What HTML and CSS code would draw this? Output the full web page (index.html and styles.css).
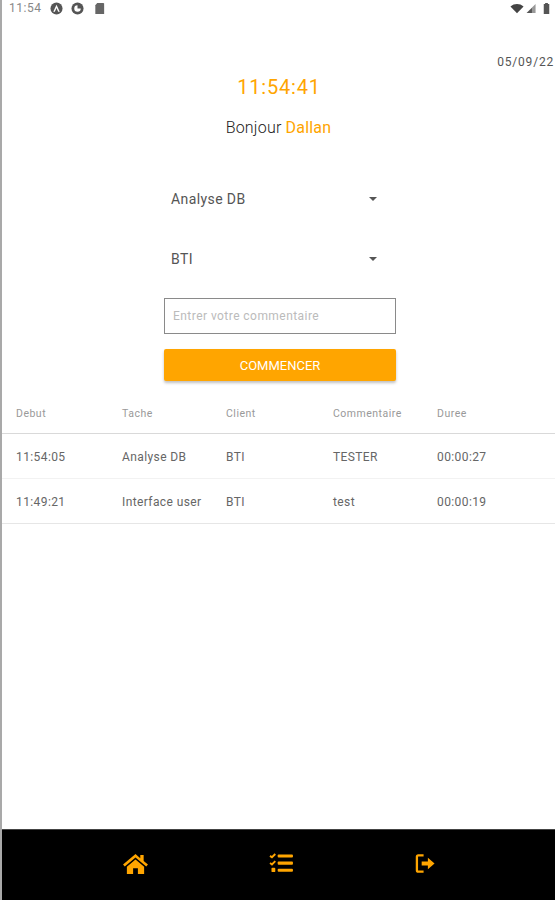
FILE: index.html
```html
<!DOCTYPE html>
<html lang="fr">
<head>
<meta charset="utf-8">
<title>Pointage</title>
<link rel="stylesheet" href="styles.css">
</head>
<body>
<div class="app">
  <header class="status">
    <div class="status-left">
      <span class="status-time">11:54</span>
      <svg class="si" viewBox="0 0 14 14"><circle cx="7" cy="7" r="6.5" fill="#555"/><path d="M7 3 L10.5 10.5 H8.8 L7 6.5 L5.2 10.5 H3.5Z" fill="#fff"/></svg>
      <svg class="si" viewBox="0 0 14 14"><circle cx="7" cy="7" r="6.5" fill="#555"/><path d="M7 3.5a3.5 3.5 0 1 0 3.5 3.5H7V3.5Z" fill="#fff"/></svg>
      <svg class="si si-card" viewBox="0 0 14 14"><path d="M4.5 1H11a1 1 0 0 1 1 1v11H2.5V3.5Z" fill="#666"/></svg>
    </div>
    <div class="status-right">
      <svg class="wifi" viewBox="0 0 16 12"><path d="M8 11.5 0.500 3.600C4.800-.2 11.200-.2 15.500 3.600Z" fill="#444"/></svg>
      <svg class="signal" viewBox="0 0 12 12"><path d="M11 1V11H1Z" fill="#999"/><path d="M7 5.500V11H1.500Z" fill="#555"/></svg>
      <svg class="battery" viewBox="0 0 7 12"><path d="M2 0H5V1H6.500V12H.5V1H2Z" fill="#555"/></svg>
    </div>
  </header>

  <main class="content">
    <div class="date">05/09/22</div>
    <div class="clock">11:54:41</div>
    <div class="greeting">Bonjour <span class="accent">Dallan</span></div>

    <form class="form">
      <div class="select"><span>Analyse DB</span><i class="caret"></i></div>
      <div class="select select-second"><span>BTI</span><i class="caret"></i></div>
      <div class="input">Entrer votre commentaire</div>
      <div class="button">COMMENCER</div>
    </form>

    <section class="table">
      <div class="row head">
        <span>Debut</span><span>Tache</span><span>Client</span><span>Commentaire</span><span>Duree</span>
      </div>
      <div class="row body">
        <span>11:54:05</span><span>Analyse DB</span><span>BTI</span><span>TESTER</span><span>00:00:27</span>
      </div>
      <div class="row body">
        <span>11:49:21</span><span>Interface user</span><span>BTI</span><span>test</span><span>00:00:19</span>
      </div>
    </section>
  </main>

  <nav class="nav">
    <svg class="home" viewBox="0 0 28 24"><path fill="#ffa500" d="M14 2 1 13l1.800 2.200L14 5.800 25.200 15.200 27 13l-4.500-3.700V3h-3.500v3.400ZM14 7.800 5 15.300V23h6.500v-6h5v6H23v-7.700Z"/></svg>
    <svg class="list" viewBox="0 0 26 22"><g fill="#ffa500"><rect x="9" y="1.500" width="16" height="3.200" rx="1"/><rect x="9" y="9" width="16" height="3.200" rx="1"/><rect x="9" y="16.500" width="16" height="3.200" rx="1"/><rect x="2.500" y="15.500" width="4" height="4.500" rx="1"/></g><path d="M1 3l2 1.500L6.500 1M1 10.500l2 1.500 3.500-3.500" fill="none" stroke="#ffa500" stroke-width="2"/></svg>
    <svg class="exit" viewBox="0 0 22 22"><path d="M9 2.500H3.500a1.500 1.500 0 0 0-1.500 1.500V18a1.500 1.500 0 0 0 1.500 1.500H9" fill="none" stroke="#ffa500" stroke-width="2.400"/><path fill="#ffa500" d="M7 9h6.500V5L20.500 11l-7 6v-4H7Z"/></svg>
  </nav>
</div>
</body>
</html>
```
FILE: styles.css
```css
* { box-sizing: border-box; }
html, body { margin: 0; height: 100%; }
body { font-family: Roboto, "Liberation Sans", sans-serif; background: #fff; color: #333; }

.app {
  width: 555px;
  height: 900px;
  display: flex;
  flex-direction: column;
  overflow: hidden;
  border-left: 2px solid #a9a9a9;
}

.status {
  height: 17px;
  display: flex;
  justify-content: space-between;
  align-items: center;
  padding: 0 5px 1px 7px;
  flex: none;
}
.status-left, .status-right { display: flex; align-items: center; }
.status-time { font-size: 12px; color: #888; margin-right: 9px; letter-spacing: .5px; }
.si { width: 13px; height: 13px; margin-right: 8px; }
.si-card { margin-left: 1px; }
.wifi { width: 14px; height: 11px; }
.signal { width: 12px; height: 11px; margin-left: 1px; }
.battery { width: 7px; height: 11px; margin-left: 6px; }

.content { flex: 1; }

.date {
  text-align: right;
  font-size: 12px;
  line-height: 14px;
  letter-spacing: .8px;
  color: #555;
  margin-top: 38px;
  padding-right: 1px;
}
.clock {
  text-align: center;
  font-size: 20px;
  line-height: 24px;
  letter-spacing: .8px;
  color: #ffa500;
  margin-top: 6px;
  padding-left: 1px;
}
.greeting {
  text-align: center;
  font-size: 16px;
  line-height: 20px;
  letter-spacing: .2px;
  font-weight: 300;
  color: #222;
  margin-top: 19px;
}
.accent { color: #ffa500; font-weight: 400; }

.form {
  width: 232px;
  margin: 51px 0 0 162px;
  display: flex;
  flex-direction: column;
}
.select {
  height: 20px;
  width: 216px;
  padding: 0 2px 0 7px;
  display: flex;
  justify-content: space-between;
  align-items: center;
  font-size: 14px;
  letter-spacing: .4px;
  color: #555;
}
.select-second { margin-top: 40px; }
.caret {
  width: 0;
  height: 0;
  border-left: 4.500px solid transparent;
  border-right: 4.500px solid transparent;
  border-top: 4px solid #555;
  margin-right: 1px;
}
.input {
  margin-top: 29px;
  height: 36px;
  border: 1px solid #8a8a8a;
  padding: 0 8px;
  display: flex;
  align-items: center;
  font-size: 12px;
  letter-spacing: .45px;
  color: #bbb;
}
.button {
  margin-top: 15px;
  height: 32px;
  background: #ffa500;
  color: #fff;
  border-radius: 2px;
  box-shadow: 0 2px 3px rgba(0, 0, 0, .25);
  display: flex;
  align-items: center;
  justify-content: center;
  font-size: 13px;
  font-weight: 400;
}

.table { margin-top: 13px; }
.row {
  display: grid;
  grid-template-columns: 106px 104px 107px 104px 1fr;
  padding-left: 14px;
  align-items: center;
}
.head {
  height: 40px;
  font-size: 10.500px;
  letter-spacing: .5px;
  color: #999;
  border-bottom: 1px solid #d9d9d9;
}
.body {
  height: 45px;
  padding-top: 2px;
  font-size: 12px;
  letter-spacing: .4px;
  color: #666;
  border-bottom: 1px solid #f2f2f2;
}
.body:last-child { border-bottom-color: #e6e6e6; }

.nav {
  flex: none;
  height: 71px;
  background: #000;
  border-top: 1px solid #444;
  margin-left: -2px;
  display: flex;
  align-items: center;
  padding: 0 0 4px 122px;
}
.home { width: 27px; height: 23px; display: block; }
.list { width: 25px; height: 21px; display: block; margin-left: 120px; }
.exit { width: 21px; height: 21px; display: block; margin-left: 121px; }
```
